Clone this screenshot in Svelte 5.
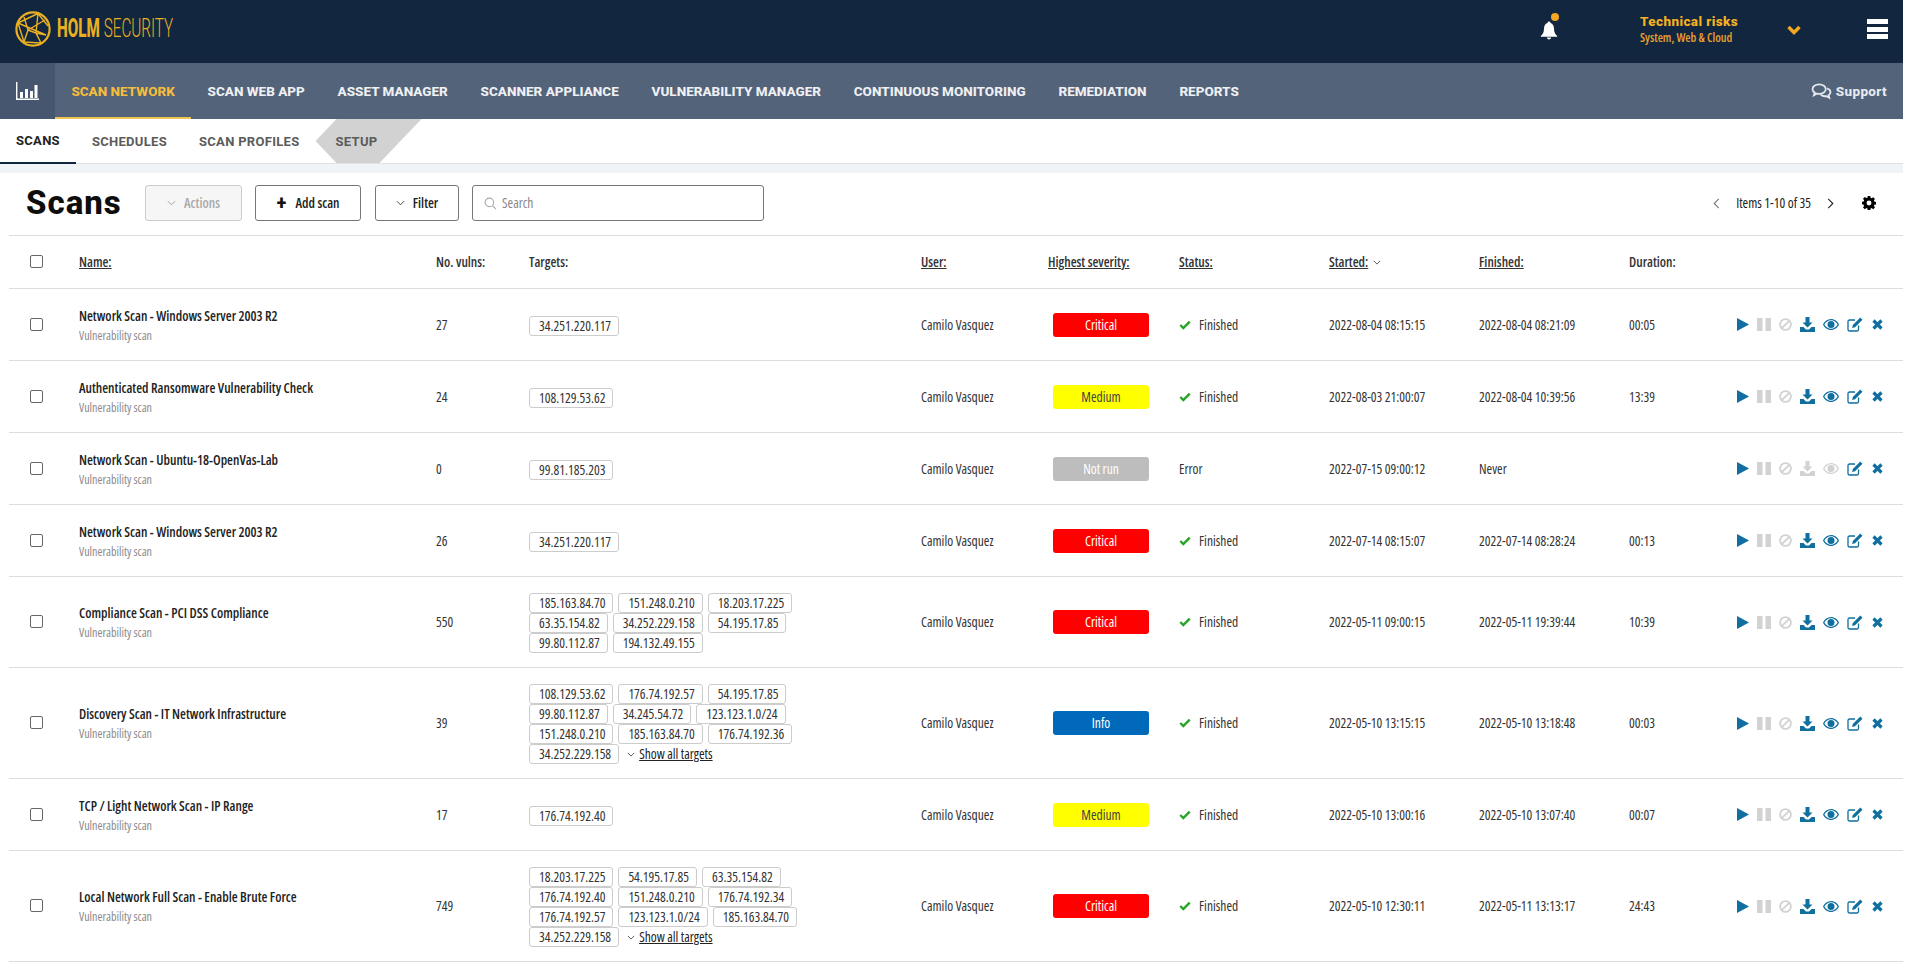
<script>
  const navItems = ['SCAN NETWORK','SCAN WEB APP','ASSET MANAGER','SCANNER APPLIANCE','VULNERABILITY MANAGER','CONTINUOUS MONITORING','REMEDIATION','REPORTS'];
  const rows = [
    {name:'Network Scan - Windows Server 2003 R2',n:'27',t:[['34.251.220.117']],sev:'Critical',st:'Finished',s:'2022-08-04 08:15:15',f:'2022-08-04 08:21:09',d:'00:05'},
    {name:'Authenticated Ransomware Vulnerability Check',n:'24',t:[['108.129.53.62']],sev:'Medium',st:'Finished',s:'2022-08-03 21:00:07',f:'2022-08-04 10:39:56',d:'13:39'},
    {name:'Network Scan - Ubuntu-18-OpenVas-Lab',n:'0',t:[['99.81.185.203']],sev:'Not run',st:'Error',s:'2022-07-15 09:00:12',f:'Never',d:'',off:true},
    {name:'Network Scan - Windows Server 2003 R2',n:'26',t:[['34.251.220.117']],sev:'Critical',st:'Finished',s:'2022-07-14 08:15:07',f:'2022-07-14 08:28:24',d:'00:13'},
    {name:'Compliance Scan - PCI DSS Compliance',n:'550',t:[['185.163.84.70','151.248.0.210','18.203.17.225'],['63.35.154.82','34.252.229.158','54.195.17.85'],['99.80.112.87','194.132.49.155']],sev:'Critical',st:'Finished',s:'2022-05-11 09:00:15',f:'2022-05-11 19:39:44',d:'10:39'},
    {name:'Discovery Scan - IT Network Infrastructure',n:'39',t:[['108.129.53.62','176.74.192.57','54.195.17.85'],['99.80.112.87','34.245.54.72','123.123.1.0/24'],['151.248.0.210','185.163.84.70','176.74.192.36'],['34.252.229.158']],more:true,sev:'Info',st:'Finished',s:'2022-05-10 13:15:15',f:'2022-05-10 13:18:48',d:'00:03'},
    {name:'TCP / Light Network Scan - IP Range',n:'17',t:[['176.74.192.40']],sev:'Medium',st:'Finished',s:'2022-05-10 13:00:16',f:'2022-05-10 13:07:40',d:'00:07'},
    {name:'Local Network Full Scan - Enable Brute Force',n:'749',t:[['18.203.17.225','54.195.17.85','63.35.154.82'],['176.74.192.40','151.248.0.210','176.74.192.34'],['176.74.192.57','123.123.1.0/24','185.163.84.70'],['34.252.229.158']],more:true,sev:'Critical',st:'Finished',s:'2022-05-10 12:30:11',f:'2022-05-11 13:13:17',d:'24:43'}
  ];
  const sevClass = {Critical:'critical',Medium:'medium','Not run':'notrun',Info:'info'};
</script>

<div class="page">
  <header class="top">
    <div class="logo">
      <svg class="globe" viewBox="0 0 36 36" fill="none" stroke="#e9b022" stroke-width="1.4">
        <circle cx="18" cy="18" r="16.6" stroke-width="2.2"/>
        <path d="M3 12 L23 2.5 M3 12 L9 31 M3 12 L31 24 M9 6 L13 19 L9 31 M13 19 L30 9 M23 2.5 L33 15 M23 2.5 L21 22 L26 32 M9 31 L26 32 M21 22 L31 24 M13 19 L21 22"/>
      </svg>
      <div class="wordmark"><span class="lg-a">HOLM</span> <span class="lg-b">SECURITY</span></div>
    </div>
    <div class="top-right">
      <div class="bell">
        <svg viewBox="0 0 18 20" width="18" height="20"><path fill="#fff" d="M9 1.5c1 0 1.5.7 1.5 1.4C13 3.6 14 6 14 8.500c0 4 1.500 6 3.200 7.500v.8H.8V16C2.500 14.500 4 12.500 4 8.500 4 6 5 3.600 7.500 2.900 7.500 2.200 8 1.500 9 1.500zM7 17.500h4c0 1.200-.9 2-2 2s-2-.8-2-2z"/></svg>
        <span class="dot"></span>
      </div>
      <div class="risk">
        <div class="risk-a">Technical risks</div>
        <div class="risk-b">System, Web &amp; Cloud</div>
      </div>
      <svg class="chev" viewBox="0 0 14 10" width="14" height="10"><path d="M1.500 2 L7 7.500 L12.500 2" fill="none" stroke="#f5a81f" stroke-width="3.400"/></svg>
      <div class="burger"><i></i><i></i><i></i></div>
    </div>
  </header>

  <nav class="nav">
    <div class="chart">
      <svg viewBox="0 0 23 18" width="23" height="18"><path d="M.7 0V17.300H23" fill="none" stroke="#fff" stroke-width="1.400"/><path fill="#fff" d="M4 10h3v6H4zM9 7h3v9H9zM14 9h3v7h-3zM18.500 3h3v13h-3z"/></svg>
    </div>
    {#each navItems as item, i}
      <a class="nav-item" class:active={i===0}>{item}</a>
    {/each}
    <div class="support">
      <svg viewBox="0 0 22 18" width="21" height="17" fill="none" stroke="#e6e9ee" stroke-width="1.900"><path d="M8.500 1.500c4 0 7 2.300 7 5s-3 5-7 5c-.9 0-1.700-.1-2.400-.3L3 13l.9-2.900C2.400 9.200 1.500 7.900 1.500 6.500c0-2.700 3-5 7-5z"/><path d="M17 5.500c2 .9 3.500 2.400 3.500 4.200 0 1.300-.8 2.500-2 3.300l.7 2.500-3-1.600c-2 .3-4.500-.2-6-1.400"/></svg>
      <span>Support</span>
    </div>
  </nav>

  <div class="subnav">
    <a class="sub active">SCANS</a>
    <a class="sub">SCHEDULES</a>
    <a class="sub">SCAN PROFILES</a>
    <a class="setup">SETUP</a>
  </div>
  <div class="band"></div>

  <main class="content">
    <div class="toolbar">
      <h1>Scans</h1>
      <button class="btn disabled"><svg class="caret" viewBox="0 0 10 6"><path d="M1 1l4 4 4-4" fill="none" stroke="#999" stroke-width="1"/></svg>Actions</button>
      <button class="btn add"><b class="plus">+</b>Add scan</button>
      <button class="btn filter"><svg class="caret" viewBox="0 0 10 6"><path d="M1 1l4 4 4-4" fill="none" stroke="#333" stroke-width="1"/></svg>Filter</button>
      <div class="search">
        <svg viewBox="0 0 14 14" width="13" height="13" fill="none" stroke="#aaa" stroke-width="1.200"><circle cx="5.800" cy="5.800" r="4.600"/><path d="M9.200 9.200L13 13"/></svg>
        <span>Search</span>
      </div>
      <div class="pager">
        <svg class="pg" viewBox="0 0 7 12" width="7" height="11"><path d="M6 1L1 6l5 5" fill="none" stroke="#777" stroke-width="1.200"/></svg>
        <span class="items">Items 1-10 of 35</span>
        <svg class="pg" viewBox="0 0 7 12" width="7" height="11"><path d="M1 1l5 5-5 5" fill="none" stroke="#222" stroke-width="1.200"/></svg>
        <svg class="gear" viewBox="0 0 16 16" width="14" height="14"><path fill="#000" fill-rule="evenodd" d="M6.600 0h2.800l.4 2.100 1.200.5 1.800-1.200 2 2-1.200 1.800.5 1.200 2.100.4v2.800l-2.100.4-.5 1.200 1.200 1.800-2 2-1.800-1.200-1.200.5-.4 2.100H6.600l-.4-2.100-1.200-.5-1.800 1.200-2-2 1.200-1.800-.5-1.200L-.2 9.400V6.600l2.100-.4.5-1.200-1.200-1.800 2-2 1.800 1.200 1.200-.5zM8 5.200a2.800 2.800 0 100 5.600 2.800 2.800 0 000-5.600z"/></svg>
      </div>
    </div>

    <div class="table">
      <div class="row head">
        <div><span class="cb"></span></div>
        <div><u>Name:</u></div>
        <div>No. vulns:</div>
        <div>Targets:</div>
        <div><u>User:</u></div>
        <div><u>Highest severity:</u></div>
        <div><u>Status:</u></div>
        <div><u>Started:</u><svg class="sort" viewBox="0 0 10 6"><path d="M1 1l4 4 4-4" fill="none" stroke="#333" stroke-width="1"/></svg></div>
        <div><u>Finished:</u></div>
        <div>Duration:</div>
        <div></div>
      </div>
      {#each rows as r}
        <div class="row">
          <div><span class="cb"></span></div>
          <div class="name"><div class="nm">{r.name}</div><div class="kind">Vulnerability scan</div></div>
          <div>{r.n}</div>
          <div class="targets">
            {#each r.t as line, li}
              <div class="tline">
                {#each line as ip}<span class="tag">{ip}</span>{/each}
                {#if r.more && li === r.t.length-1}
                  <span class="more"><svg class="caret2" viewBox="0 0 10 6"><path d="M1 1l4 4 4-4" fill="none" stroke="#333" stroke-width="1"/></svg><u>Show all targets</u></span>
                {/if}
              </div>
            {/each}
          </div>
          <div>Camilo Vasquez</div>
          <div><span class="sev {sevClass[r.sev]}">{r.sev}</span></div>
          <div class="status">
            {#if r.st==='Finished'}<svg viewBox="0 0 14 11" width="12" height="10"><path d="M1.500 5.500L5 9l7.500-7.500" fill="none" stroke="#27a527" stroke-width="2.800"/></svg>{/if}
            <span>{r.st}</span>
          </div>
          <div>{r.s}</div>
          <div>{r.f}</div>
          <div>{r.d}</div>
          <div class="acts">
            <svg class="i on" viewBox="0 0 12 13" width="12" height="13"><path d="M0 0L12 6.500 0 13z"/></svg>
            <svg class="i off" viewBox="0 0 14 13" width="14" height="13"><path d="M0 0h5.500v13H0zM8.500 0H14v13H8.500z"/></svg>
            <svg class="i off" viewBox="0 0 14 14" width="13" height="13"><circle cx="7" cy="7" r="5.800" fill="none" stroke="#d2d2d2" stroke-width="2"/><path d="M3 11L11 3" stroke="#d2d2d2" stroke-width="2"/></svg>
            <svg class={r.off ? 'i off' : 'i on'} viewBox="0 0 15 15" width="15" height="15"><path d="M5.500 0h4v5.500h3L7.500 10.500 2.500 5.500h3zM0 10h3.500l2.500 2.500h3L11.500 10H15v5H0z"/></svg>
            <svg class={r.off ? 'i off' : 'i on'} viewBox="0 0 16 11" width="16" height="11"><path fill-rule="evenodd" d="M8 0c3.600 0 6.500 2.300 8 5.500C14.500 8.700 11.600 11 8 11S1.500 8.700 0 5.500C1.500 2.300 4.400 0 8 0zM8 1.200C5.200 1.200 2.800 3 1.400 5.500 2.800 8 5.200 9.800 8 9.800s5.200-1.800 6.600-4.300C13.200 3 10.800 1.200 8 1.200zM8 2a3.500 3.500 0 110 7 3.500 3.500 0 010-7z"/></svg>
            <svg class="i on" viewBox="0 0 16 15" width="16" height="15"><path d="M11.500 8.500V12.500a1.500 1.500 0 01-1.500 1.500H2.500A1.500 1.500 0 011 12.500V4.500A1.500 1.500 0 012.500 3H8" fill="none" stroke="#116f9f" stroke-width="1.300"/><path d="M13.300.5l2.200 2.200L8 10.200l-2.900.7.700-2.900z"/></svg>
            <svg class="i on x" viewBox="0 0 11 11" width="11" height="11"><path d="M1.500 1.500l8 8M9.500 1.500l-8 8" stroke="#116f9f" stroke-width="3.200"/></svg>
          </div>
        </div>
      {/each}
    </div>
  </main>
</div>

<style>
  :global(html), :global(body) { margin: 0; height: 970px; overflow: hidden; background: #fff; }
  .page { width: 1903px; height: 970px; overflow: hidden; font-family: "Open Sans", "Noto Sans", sans-serif; font-stretch: 83%; font-size: 13.500px; color: #333; }
  .top { height: 63px; background: #12263f; display: flex; align-items: center; justify-content: space-between; }
  .logo { display: flex; align-items: center; padding-left: 15px; margin-top: -5px; }
  .globe { width: 36px; height: 36px; }
  .wordmark { margin-left: 6px; font-family: Roboto, sans-serif; font-stretch: normal; font-size: 25px; line-height: 20px; color: #e9b022; width: 118px; white-space: nowrap; transform: scaleX(.61); transform-origin: left center; }
  .lg-a { font-weight: 800; }
  .lg-b { font-weight: 300; }
  .top-right { display: flex; align-items: center; }
  .bell { position: relative; width: 18px; height: 20px; margin-right: 82px; margin-top: -4px; }
  .bell svg { display: block; }
  .dot { position: absolute; left: 11px; top: -7px; width: 8px; height: 8px; border-radius: 50%; background: #f5a623; }
  .risk { width: 147px; margin-top: -4px; }
  .risk-a { font-family: Roboto, sans-serif; font-stretch: normal; font-weight: 800; font-size: 13.500px; line-height: 16px; color: #f7b21f; letter-spacing: .4px; }
  .risk-b { font-size: 12px; line-height: 16px; color: #e9a12d; margin-top: 1px; font-weight: 600; }
  .chev { margin-right: 66px; margin-top: -4px; }
  .burger { width: 21px; margin-right: 15px; margin-top: -5px; display: flex; flex-direction: column; gap: 2.500px; }
  .burger i { display: block; height: 5px; background: #fff; }

  .nav { height: 56px; background: #536379; display: flex; align-items: stretch; font-family: Roboto, sans-serif; font-stretch: normal; font-weight: 800; font-size: 13.500px; color: #eef0f3; }
  .chart { width: 55px; background: #46566e; display: flex; align-items: center; justify-content: center; }
  .nav-item { padding: 0 16.400px; display: flex; align-items: center; white-space: nowrap; }
  .nav-item.active { color: #f6bd3c; border-bottom: 2px solid #f0c452; padding-top: 2px; box-sizing: border-box; }
  .support { margin-left: auto; display: flex; align-items: center; gap: 4px; padding-right: 16px; color: #e6e9ee; letter-spacing: .35px; }

  .subnav { height: 44px; background: #fff; display: flex; align-items: stretch; border-bottom: 1px solid #dfe2e6; font-family: Roboto, sans-serif; font-stretch: normal; font-weight: 700; font-size: 13px; letter-spacing: .3px; color: #5b5b5b; }
  .sub { padding: 0 16px; display: flex; align-items: center; box-sizing: border-box; height: 45px; }
  .sub.active { color: #222; border-bottom: 2px solid #12263f; }
  .setup { width: 106px; padding-left: 20px; box-sizing: border-box; display: flex; align-items: center; background: #d2d2d2; clip-path: polygon(21px 0, 106px 0, 64px 100%, 21px 100%, 0 50%); }
  .band { height: 9px; background: #f1f4f7; }

  .content { background: #fff; padding-left: 9px; }
  .toolbar { height: 63px; box-sizing: border-box; border-bottom: 1px solid #ddd; display: flex; align-items: center; padding: 0 27px 2px 0; }
  h1 { margin: 0 26px 0 17px; width: 93px; font-family: Roboto, sans-serif; font-stretch: normal; font-size: 33px; font-weight: 800; letter-spacing: 1px; color: #0d0d0d; line-height: 36px; }
  .btn { height: 36px; box-sizing: border-box; border: 1px solid #777; border-radius: 3px; background: #fff; font: inherit; font-stretch: inherit; font-weight: 600; color: #222; display: flex; align-items: center; padding: 0; margin-right: 14px; justify-content: center; }
  .btn.disabled { width: 97px; background: #f6f6f6; border-color: #ccc; color: #aaa; margin-right: 13px; }
  .btn.add { width: 106px; }
  .btn.filter { width: 84px; margin-right: 13px; }
  .caret { width: 9px; height: 6px; margin-right: 8px; }
  .plus { font-family: Roboto, sans-serif; font-size: 21px; font-weight: 700; line-height: 18px; margin-right: 9px; color: #111; }
  .search { width: 292px; height: 36px; box-sizing: border-box; border: 1px solid #777; border-radius: 3px; display: flex; align-items: center; gap: 5px; padding-left: 11px; color: #888; }
  .pager { margin-left: auto; display: flex; align-items: center; color: #222; }
  .items { margin: 0 16px; }
  .gear { margin-left: 28px; }

  .row { display: grid; grid-template-columns: 70px 357px 93px 392px 127px 131px 150px 150px 150px 108px 1fr; align-items: center; min-height: 71px; border-bottom: 1px solid #ddd; box-sizing: content-box; }
  .row.head { min-height: 52px; font-weight: 600; color: #333; }
  .row > div:first-child { padding-left: 21px; }
  .cb { display: block; width: 11px; height: 11px; margin-top: -1px; border: 1px solid #666; border-radius: 2px; background: #fff; }
  .nm { font-weight: 600; font-size: 13.500px; line-height: 18px; color: #222; }
  .kind { font-size: 12px; line-height: 14px; margin-top: 4px; color: #8a8a8a; }
  .targets { padding: 16px 0 14px; }
  .tline { display: flex; height: 20px; align-items: center; }
  .tag { box-sizing: border-box; height: 20px; line-height: 18px; padding: 0 7px 0 9px; border: 1px solid #ccc; border-radius: 3px; margin-right: 5px; font-size: 13.500px; background: #fff; color: #333; white-space: nowrap; }
  .more { margin-left: 3px; color: #222; display: flex; align-items: center; }
  .caret2 { width: 8px; height: 5px; margin-right: 4px; }
  .sev { display: block; width: 96px; height: 24px; margin-left: 5px; border-radius: 3px; line-height: 24px; text-align: center; font-weight: 500; }
  .critical { background: #ff0000; color: #fff; }
  .medium { background: #ffff00; color: #444; }
  .notrun { background: #bdbdbd; color: #fff; }
  .info { background: #0069b9; color: #fff; }
  .status { display: flex; align-items: center; gap: 8px; }
  .sort { width: 8px; height: 5px; margin-left: 5px; vertical-align: 2px; }
  .acts { display: flex; align-items: center; gap: 8px; }
  .x { margin-left: 1px; }
  .i.on { fill: #116f9f; }
  .i.off { fill: #d2d2d2; }
</style>
